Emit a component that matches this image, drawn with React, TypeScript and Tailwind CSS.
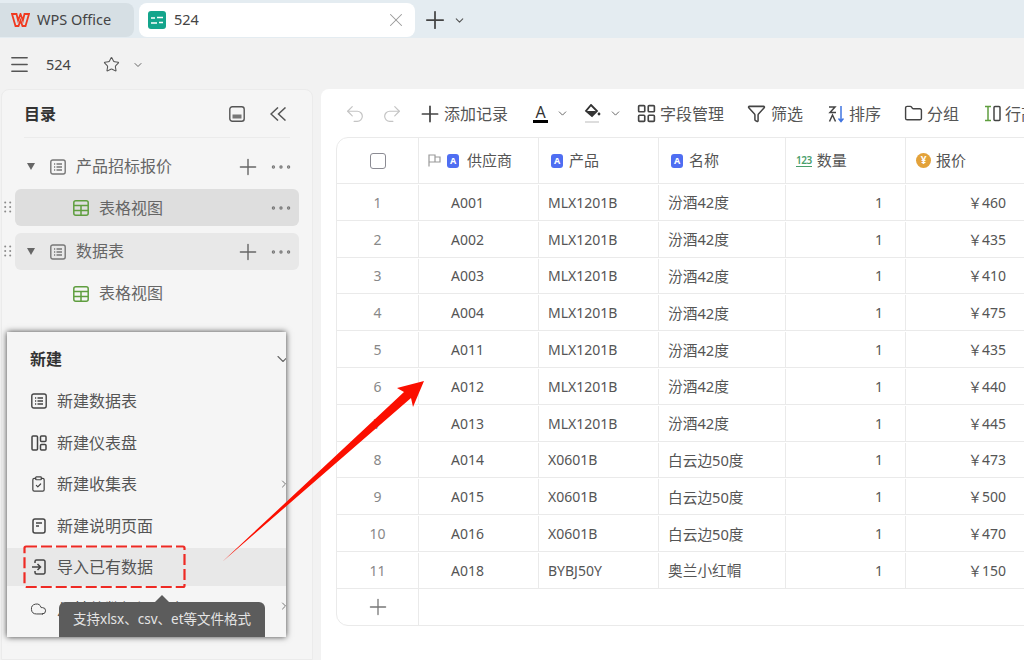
import React from 'react';
import { Undo2, Redo2, Plus, Ellipsis, ChevronDown, Star, Menu, X, LayoutGrid, Funnel, Folder, Cloud, ClipboardCheck, ChevronRight } from 'lucide-react';

const rows = [
  ['1', 'A001', 'MLX1201B', '汾酒42度', '1', '￥460'],
  ['2', 'A002', 'MLX1201B', '汾酒42度', '1', '￥435'],
  ['3', 'A003', 'MLX1201B', '汾酒42度', '1', '￥410'],
  ['4', 'A004', 'MLX1201B', '汾酒42度', '1', '￥475'],
  ['5', 'A011', 'MLX1201B', '汾酒42度', '1', '￥435'],
  ['6', 'A012', 'MLX1201B', '汾酒42度', '1', '￥440'],
  ['7', 'A013', 'MLX1201B', '汾酒42度', '1', '￥445'],
  ['8', 'A014', 'X0601B', '白云边50度', '1', '￥473'],
  ['9', 'A015', 'X0601B', '白云边50度', '1', '￥500'],
  ['10', 'A016', 'X0601B', '白云边50度', '1', '￥470'],
  ['11', 'A018', 'BYBJ50Y', '奥兰小红帽', '1', '￥150'],
];

function SheetIcon({ size = 16, className = '' }: { size?: number; className?: string }) {
  return (
    <svg width={size} height={size} viewBox="0 0 16 16" fill="none" stroke="currentColor" strokeWidth="1.4" className={className}>
      <rect x="0.8" y="1" width="14.4" height="14" rx="2" />
      <path d="M4 5h1.200M4 8h1.200M4 11h1.200M6.500 5H12M6.500 8H12M6.500 11H12" />
    </svg>
  );
}

function GridIcon() {
  return (
    <svg width="16" height="16" viewBox="0 0 16 16" fill="none" stroke="#5f9e3f" strokeWidth="1.5" className="shrink-0">
      <rect x="0.8" y="0.8" width="14.4" height="14.4" rx="2" />
      <path d="M1 5.500h14M1 10.500h14M8 5.500v10" />
    </svg>
  );
}

function DragDots() {
  return (
    <svg width="8" height="12" viewBox="0 0 8 12" fill="#8a8a8a">
      <circle cx="1.2" cy="1.5" r="1" /><circle cx="6.2" cy="1.5" r="1" />
      <circle cx="1.2" cy="6" r="1" /><circle cx="6.2" cy="6" r="1" />
      <circle cx="1.2" cy="10.5" r="1" /><circle cx="6.2" cy="10.5" r="1" />
    </svg>
  );
}

function TextFieldIcon() {
  return (
    <span className="w-3 h-[14px] rounded-[3px] bg-[#4f6ef2] text-white text-[9px] font-bold leading-[14px] text-center shrink-0">A</span>
  );
}

function TreeRow({ bg, drag, children }: { bg?: string; drag?: boolean; children: React.ReactNode }) {
  return (
    <div className={`relative ml-[13px] mr-[13px] h-[37px] rounded-md flex items-center ${bg ?? ''}`}>
      {drag && <span className="absolute -left-[11px] top-[12px] flex"><DragDots /></span>}
      {children}
    </div>
  );
}

function RowActions({ add }: { add?: boolean }) {
  return (
    <>
      {add && <Plus size={26} strokeWidth={1.300} className="ml-auto text-[#666]" />}
      <Ellipsis size={26} strokeWidth={1.100} className={`${add ? 'ml-[6.5px]' : 'ml-auto'} mr-[5.5px] text-[#777]`} />
    </>
  );
}

function MenuItem({ icon, label, active }: { icon: React.ReactNode; label: string; active?: boolean }) {
  return (
    <div className={`h-[38px] mb-[3.5px] pl-[23px] flex items-center gap-[10px] text-[16px] text-[#555] ${active ? 'bg-[#e8e8e8]' : ''}`}>
      <span className="w-[17px] flex justify-center text-[#444]">{icon}</span>
      {label}
    </div>
  );
}

const cols = 'grid grid-cols-[82px_120px_120px_127px_120px_120px]';

export default function App() {
  return (
    <div className="relative w-[1024px] h-[660px] overflow-hidden bg-[#f2f2f2] text-[#444] font-['Noto_Sans','Noto_Sans_CJK_SC',sans-serif]">
      {/* tabs */}
      <div className="h-[38px] bg-[#e4ecf1] flex items-end gap-[5px] pb-px">
        <div className="w-[134px] h-[34px] bg-[#d6dfe4] rounded-r-lg flex items-center pl-[11px] gap-[7px] text-[14.5px] text-[#444]">
          <svg width="19" height="14" viewBox="0 0 19 14" fill="none" stroke="#f03a20" strokeWidth="1.800" strokeLinejoin="miter">
            <path d="M1 1h4.500l1.600 6.500L9.500 1l2.400 6.500L13.500 1H18l-3.500 12h-3L9.500 7.500 7.500 13h-3z" />
          </svg>
          WPS Office
        </div>
        <div className="w-[276px] h-[34px] bg-white rounded-lg flex items-center pl-[9px] pr-[8px] text-[14.5px]">
          <span className="w-[18px] h-[18px] rounded-[3px] bg-[#14a58c] flex items-center justify-center mr-[8px]">
            <svg width="12" height="9" viewBox="0 0 12 9" fill="none" stroke="#fff" strokeWidth="1.6"><path d="M0 2h4M6 1.500h6M0 7h6M8 6.500h4" /></svg>
          </span>
          524
          <X size={22} strokeWidth={1.100} className="ml-auto text-[#999]" />
        </div>
        <div className="flex items-center h-[34px] ml-px gap-[3.5px]">
          <Plus size={28} strokeWidth={1.500} className="text-[#444]" />
          <ChevronDown size={13} strokeWidth={2} className="text-[#555]" />
        </div>
      </div>

      {/* title bar */}
      <div className="h-[51px] flex items-center pl-[8px] pt-[2px]">
        <Menu size={23} strokeWidth={1.500} className="text-[#555]" />
        <span className="ml-[15px] text-[14.5px] text-[#444]">524</span>
        <Star size={17} strokeWidth={1.500} className="ml-[32px] text-[#555]" />
        <ChevronDown size={12} strokeWidth={2} className="ml-[12px] text-[#666]" />
      </div>

      <div className="flex gap-[8px] pl-px h-[571px]">
        {/* sidebar */}
        <aside className="w-[312px] shrink-0 bg-[#f5f5f5] border border-[#ebebeb] rounded-t-lg">
          <div className="mx-[22px] h-[48px] flex items-center border-b border-[#ebebeb]">
            <span className="text-[16px] font-bold text-[#333]">目录</span>
            <svg width="16" height="16" viewBox="0 0 16 16" fill="none" stroke="#555" strokeWidth="1.400" className="ml-auto mr-[1px]">
              <rect x="0.8" y="0.8" width="14.4" height="14.4" rx="2.500" />
              <rect x="3.500" y="8.500" width="9" height="4" fill="#777" stroke="none" />
            </svg>
            <svg width="16" height="14" viewBox="0 0 16 14" fill="none" stroke="#555" strokeWidth="1.500" className="ml-[24px] mr-[4px]">
              <path d="M8 0.500L1 7l7 6.500M15.500 0.500L8.500 7l7 6.500" />
            </svg>
          </div>
          <div className="mt-[10px] flex flex-col gap-[7px] text-[16px] text-[#666]">
            <div className="flex flex-col gap-[4px]">
              <TreeRow>
                <span className="ml-[12px] w-0 h-0 border-x-[4px] border-x-transparent border-t-[7px] border-t-[#666]" />
                <SheetIcon className="ml-[15px] text-[#777]" />
                <span className="ml-[10px] -mt-[1px]">产品招标报价</span>
                <RowActions add />
              </TreeRow>
              <TreeRow bg="bg-[#dedede]" drag>
                <span className="ml-[58px]"><GridIcon /></span>
                <span className="ml-[10px]">表格视图</span>
                <RowActions />
              </TreeRow>
            </div>
            <div className="flex flex-col gap-[5px]">
              <TreeRow bg="bg-[#e8e8e8]" drag>
                <span className="ml-[12px] w-0 h-0 border-x-[4px] border-x-transparent border-t-[7px] border-t-[#666]" />
                <SheetIcon className="ml-[15px] text-[#777]" />
                <span className="ml-[10px] -mt-[1px]">数据表</span>
                <RowActions add />
              </TreeRow>
              <TreeRow>
                <span className="ml-[58px]"><GridIcon /></span>
                <span className="ml-[10px] -mt-[1px]">表格视图</span>
              </TreeRow>
            </div>
          </div>
        </aside>

        {/* main */}
        <main className="flex-1 min-w-0 bg-white rounded-tl-lg overflow-hidden">
          <div className="h-[48px] pl-[22.500px] pt-px flex items-center whitespace-nowrap text-[16px] text-[#555]">
            <Undo2 size={22} strokeWidth={1.300} className="shrink-0 text-[#c4c4c4]" />
            <Redo2 size={22} strokeWidth={1.300} className="shrink-0 ml-[15px] text-[#c4c4c4]" />
            <Plus size={26} strokeWidth={1.600} className="shrink-0 ml-[14.500px] mr-[1px] text-[#444]" />
            添加记录
            <span className="ml-[25px] flex flex-col items-center w-[15px] text-[#333]">
              <span className="text-[16px] leading-[15px]">A</span>
              <span className="w-[15px] h-[3px] bg-black" />
            </span>
            <ChevronDown size={13} strokeWidth={1.800} className="shrink-0 ml-[7.500px] text-[#666]" />
            <svg width="17" height="20" viewBox="0 0 17 20" fill="none" className="shrink-0 ml-[15.500px]">
              <path d="M7 1l6 6-5 5-6-5z" stroke="#333" strokeWidth="1.800" />
              <path d="M3 7h9l-4 5z" fill="#333" />
              <circle cx="15" cy="10" r="1.400" fill="#333" />
              <rect x="1" y="17" width="14" height="2" fill="#ddd" />
            </svg>
            <ChevronDown size={13} strokeWidth={1.800} className="shrink-0 ml-[8px] text-[#666]" />
            <LayoutGrid size={21} strokeWidth={1.900} className="shrink-0 ml-[13.500px] mr-[3.500px] text-[#444]" />
            字段管理
            <Funnel size={19} strokeWidth={1.900} className="shrink-0 ml-[23px] mr-[5px] text-[#444]" />
            筛选
            <svg width="16" height="18" viewBox="0 0 16 18" fill="none" className="shrink-0 ml-[25px] mr-[5px]">
              <path d="M1 2h6L2 7.500h6" stroke="#444" strokeWidth="1.500" />
              <path d="M1.500 16.500L4.500 10l3 6.500" stroke="#444" strokeWidth="1.500" />
              <path d="M13 1v15M10.500 13.500L13 16.500l2.500-3" stroke="#3f74e0" strokeWidth="1.500" />
            </svg>
            排序
            <Folder size={19} strokeWidth={1.800} className="shrink-0 ml-[22.500px] mr-[4.500px] text-[#444]" />
            分组
            <svg width="17" height="17" viewBox="0 0 17 17" fill="none" className="ml-[25px] mr-[4px] shrink-0">
              <path d="M1 1.500h6M1 15.500h6M4 1.500v14" stroke="#5f9e3f" strokeWidth="1.500" />
              <rect x="10" y="1.500" width="6" height="14" rx="1" stroke="#444" strokeWidth="1.500" />
            </svg>
            行高
          </div>

          {/* table */}
          <div className="ml-[15px] w-[720px] border border-[#eaeaea] rounded-l-xl text-[14px] text-[#555]">
            <div className={`${cols} h-[46px] border-b border-[#eaeaea] text-[15px]`}>
              <div className="flex items-center justify-center border-r border-[#eaeaea]">
                <span className="w-4 h-4 border-[1.5px] border-[#8b8b93] rounded-[3px]" />
              </div>
              <div className="flex items-center pl-[9px] gap-[6px] border-r border-[#eaeaea]">
                <svg width="13" height="13" viewBox="0 0 13 13" fill="none" stroke="#999" strokeWidth="1.200" className="shrink-0">
                  <path d="M1 12.500V1h6v7H1M7 3h5v5H7" />
                </svg>
                <TextFieldIcon />
                <span className="ml-[2px]">供应商</span>
              </div>
              <div className="flex items-center pl-[12px] gap-[6px] border-r border-[#eaeaea]"><TextFieldIcon />产品</div>
              <div className="flex items-center pl-[12px] gap-[6px] border-r border-[#eaeaea]"><TextFieldIcon />名称</div>
              <div className="flex items-center pl-[10px] gap-[5px] border-r border-[#eaeaea]">
                <span className="border-b-[1.5px] border-[#4a9e6b] text-[#4a9e6b] text-[10px] leading-[11px] font-semibold tracking-tighter">123</span>
                数量
              </div>
              <div className="flex items-center pl-[10px] gap-[5px]">
                <span className="w-[15px] h-[15px] rounded-full bg-[#e3a23a] text-white text-[10px] leading-[15px] text-center font-bold">¥</span>
                报价
              </div>
            </div>
            {rows.map((r) => (
              <div key={r[0]} className={`${cols} h-[36.8px] pt-px border-b border-[#eaeaea]`}>
                <div className="flex items-center justify-center border-r border-[#eaeaea] text-[#888]">{r[0]}</div>
                <div className="flex items-center pl-[32px] border-r border-[#eaeaea]">{r[1]}</div>
                <div className="flex items-center pl-[9px] border-r border-[#eaeaea]">{r[2]}</div>
                <div className="flex items-center pl-[9px] border-r border-[#eaeaea] text-[14.7px]">{r[3]}</div>
                <div className="flex items-center justify-end pr-[22px] border-r border-[#eaeaea]">{r[4]}</div>
                <div className="flex items-center justify-end pr-[20px]">{r[5]}</div>
              </div>
            ))}
            <div className={`${cols} h-[36px]`}>
              <div className="flex items-center justify-center border-r border-[#eaeaea] text-[#777]">
                <Plus size={26} strokeWidth={1.200} />
              </div>
            </div>
          </div>
        </main>
      </div>

      {/* new menu popup */}
      <div className="absolute left-[7px] top-[332px] w-[279px] h-[305px] bg-[#f5f5f5] shadow-[0_0_6px_rgba(0,0,0,0.75)] overflow-hidden">
        <div className="h-[50px] pl-[23px] pt-[4px] flex items-center text-[16px] font-bold text-[#333] relative">
          新建
          <ChevronDown size={20} strokeWidth={1.300} className="absolute -right-[7px] top-[17px] text-[#666]" />
        </div>
        <MenuItem label="新建数据表" icon={<SheetIcon size={16} />} />
        <MenuItem label="新建仪表盘" icon={
          <svg width="16" height="16" viewBox="0 0 16 16" fill="none" stroke="currentColor" strokeWidth="1.500">
            <rect x="1" y="1" width="5.500" height="14" rx="1" />
            <rect x="9.500" y="1" width="5.500" height="5.500" rx="1" />
            <rect x="9.500" y="9.500" width="5.500" height="5.500" rx="1" />
          </svg>
        } />
        <MenuItem label="新建收集表" icon={<ClipboardCheck size={18} strokeWidth={1.700} />} />
        <MenuItem label="新建说明页面" icon={
          <svg width="14" height="16" viewBox="0 0 14 16" fill="none" stroke="currentColor" strokeWidth="1.500">
            <rect x="1" y="1" width="12" height="14" rx="2" />
            <path d="M4 5h6M4 8h3" />
          </svg>
        } />
        <MenuItem active label="导入已有数据" icon={
          <svg width="16" height="16" viewBox="0 0 16 16" fill="none" stroke="currentColor" strokeWidth="1.500">
            <path d="M4 4V2.500A1.500 1.500 0 015.500 1h7A1.500 1.500 0 0114 2.500v11a1.500 1.500 0 01-1.500 1.500h-7A1.500 1.500 0 014 13.500V12M1 8h8M6.500 5l3 3-3 3" />
          </svg>
        } />
        <MenuItem label="从其他数据源同步" icon={<Cloud size={20} strokeWidth={1.400} />} />
        <ChevronRight size={12} className="absolute -right-[4px] top-[146px] text-[#777]" />
        <ChevronRight size={12} className="absolute -right-[4px] top-[268px] text-[#777]" />
      </div>

      {/* tooltip */}
      <div className="absolute left-[59px] top-[602px] w-[206px] h-[35px] bg-[#5c5c5c] rounded-t-md flex items-center justify-center text-[13.5px] text-[#e4e4e4] whitespace-nowrap">
        <span className="absolute left-[95px] -top-[7px] w-0 h-0 border-x-[8px] border-x-transparent border-b-[8px] border-b-[#5c5c5c]" />
        支持xlsx、csv、et等文件格式
      </div>

      {/* red annotations */}
      <svg className="absolute left-0 top-0 pointer-events-none" width="1024" height="660" viewBox="0 0 1024 660">
        <rect x="24.500" y="546.500" width="160" height="40.500" rx="1.500" fill="none" stroke="#ee2a24" strokeWidth="2.200" strokeDasharray="11 4" />
        <path d="M222 562 L404 392 L397 388 L424 381 L413 407 L411 398 Z" fill="#fb0f00" />
      </svg>
    </div>
  );
}
